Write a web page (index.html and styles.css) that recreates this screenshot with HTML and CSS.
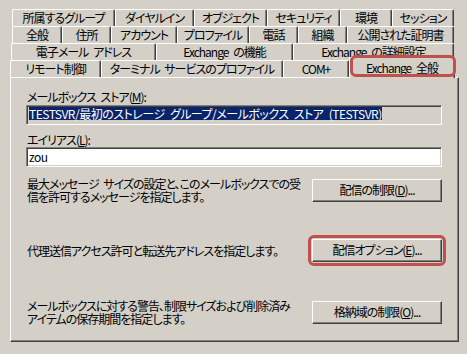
FILE: index.html
```html
<!DOCTYPE html>
<html>
<head>
    <title>プロパティ</title>
    <link rel="stylesheet" href="styles.css">
</head>
<body>
    <div class="dialog">
        <!-- Multi-row tab strip -->
        <div class="tab-row row1">
            <div class="tab w103">所属するグループ</div>
            <div class="tab w79">ダイヤルイン</div>
            <div class="tab w73">オブジェクト</div>
            <div class="tab w73">セキュリティ</div>
            <div class="tab w52">環境</div>
            <div class="tab w62">セッション</div>
        </div>
        <div class="tab-row row2">
            <div class="tab w50">全般</div>
            <div class="tab w49">住所</div>
            <div class="tab w66">アカウント</div>
            <div class="tab w72">プロファイル</div>
            <div class="tab w49">電話</div>
            <div class="tab w49">組織</div>
            <div class="tab w107">公開された証明書</div>
        </div>
        <div class="tab-row row3">
            <div class="tab w145">電子メール アドレス</div>
            <div class="tab w137">Exchange の機能</div>
            <div class="tab w161">Exchange の詳細設定</div>
        </div>
        <div class="tab-row row4">
            <div class="tab w91">リモート制御</div>
            <div class="tab w182">ターミナル サービスのプロファイル</div>
            <div class="tab w66">COM+</div>
            <div class="tab active w106">Exchange 全般</div>
        </div>

        <!-- Tab page -->
        <div class="panel">
            <div class="field-label">メールボックス ストア(<u>M</u>):</div>
            <div class="textbox readonly"><span class="selected">TESTSVR/最初のストレージ グループ/メールボックス ストア (TESTSVR)</span></div>

            <div class="field-label label-alias">エイリアス(<u>L</u>):</div>
            <div class="textbox">zou</div>

            <div class="action-row row-a">
                <p>最大メッセージ サイズの設定と、このメールボックスでの受<br>信を許可するメッセージを指定します。</p>
                <button>配信の制限(<u>D</u>)...</button>
            </div>

            <div class="action-row row-b">
                <p>代理送信アクセス許可と転送先アドレスを指定します。</p>
                <div class="callout"><button>配信オプション(<u>E</u>)...</button></div>
            </div>

            <div class="action-row row-c">
                <p>メールボックスに対する警告、制限サイズおよび削除済み<br>アイテムの保存期間を指定します。</p>
                <button>格納域の制限(<u>O</u>)...</button>
            </div>
        </div>
    </div>
</body>
</html>
```

FILE: styles.css
```css
/* Classic dialog face colour and font */
body {
    margin: 0;
    background-color: #d4d0c8;
    font-family: "Noto Sans CJK JP", "Noto Sans", sans-serif;
    font-size: 12px;
    color: #000;
    font-feature-settings: "palt";
    letter-spacing: -1px;
    word-spacing: 3px;
}

.dialog {
    width: 467px;
    height: 354px;
    padding-top: 9px;
    box-sizing: border-box;
}

/* Tab rows */
.tab-row {
    display: flex;
    height: 17px;
}

.row1, .row2 {
    margin-left: 12px;
}

.row3 {
    margin-left: 11px;
}

.row4 {
    margin-left: 10px;
}

.tab {
    box-sizing: border-box;
    height: 17px;
    border-top: 1px solid #fff;
    border-left: 1px solid #fff;
    border-right: 1px solid #404040;
    border-radius: 2px 2px 0 0;
    box-shadow: inset -1px 0 #808080;
    background-color: #d4d0c8;
    text-align: center;
    line-height: 15px;
    white-space: nowrap;
    overflow: hidden;
}

/* Selected tab, raised and joined to the page */
.tab.active {
    position: relative;
    z-index: 2;
    height: 21px;
    margin-top: -3px;
    line-height: 19px;
    overflow: visible;
}

.tab.active::after {
    content: "";
    position: absolute;
    left: 0;
    right: -2px;
    top: -3px;
    bottom: 1px;
    border: 3px solid #c0504d;
    border-radius: 6px;
}

.w49 { width: 49px; }
.w50 { width: 50px; }
.w52 { width: 52px; }
.w62 { width: 62px; }
.w66 { width: 66px; }
.w72 { width: 72px; }
.w73 { width: 73px; }
.w79 { width: 79px; }
.w91 { width: 91px; }
.w103 { width: 103px; }
.w106 { width: 106px; }
.w107 { width: 107px; }
.w137 { width: 137px; }
.w145 { width: 145px; }
.w161 { width: 161px; }
.w182 { width: 182px; }

/* Tab page */
.panel {
    box-sizing: border-box;
    width: 449px;
    height: 265px;
    margin-left: 10px;
    border: 1px solid;
    border-color: #fff #404040 #404040 #fff;
    box-shadow: inset -1px -1px #808080;
    padding: 12px 16px 0 15px;
}

.field-label {
    line-height: 13px;
    padding-left: 1px;
}

.label-alias {
    margin-top: 8px;
}

/* Sunken edit boxes */
.textbox {
    box-sizing: border-box;
    height: 20px;
    margin-top: 1px;
    border: 1px solid;
    border-color: #808080 #fff #fff #808080;
    box-shadow: inset 1px 1px #404040, inset -1px -1px #d4d0c8;
    background-color: #fff;
    padding: 1px 2px 0;
    line-height: 16px;
    white-space: nowrap;
    overflow: hidden;
    letter-spacing: -0.5px;
}

.textbox.readonly {
    margin-top: 2px;
    background-color: #d4d0c8;
}

.selected {
    display: inline-block;
    height: 13px;
    line-height: 13px;
    vertical-align: top;
    background-color: #0a246a;
    color: #fff;
}

/* Description + button rows */
.action-row {
    display: flex;
    justify-content: space-between;
    align-items: center;
    height: 26px;
}

.action-row p {
    margin: 0;
    line-height: 13px;
    padding-left: 1px;
    white-space: nowrap;
}

.row-a {
    margin-top: 10px;
}

.row-b {
    margin-top: 34px;
}

.row-c {
    margin-top: 36px;
}

button {
    box-sizing: border-box;
    width: 130px;
    height: 23px;
    padding: 0;
    background-color: #d4d0c8;
    border: 1px solid;
    border-color: #fff #404040 #404040 #fff;
    box-shadow: inset -1px -1px #808080;
    font: inherit;
    letter-spacing: inherit;
    word-spacing: inherit;
    color: #000;
    line-height: 20px;
}

/* Red highlight drawn round the options button */
.callout {
    position: relative;
    display: flex;
}

.callout::after {
    content: "";
    position: absolute;
    left: -4px;
    right: -4px;
    top: -4px;
    bottom: -4px;
    border: 3px solid #c0504d;
    border-radius: 6px;
}
```
